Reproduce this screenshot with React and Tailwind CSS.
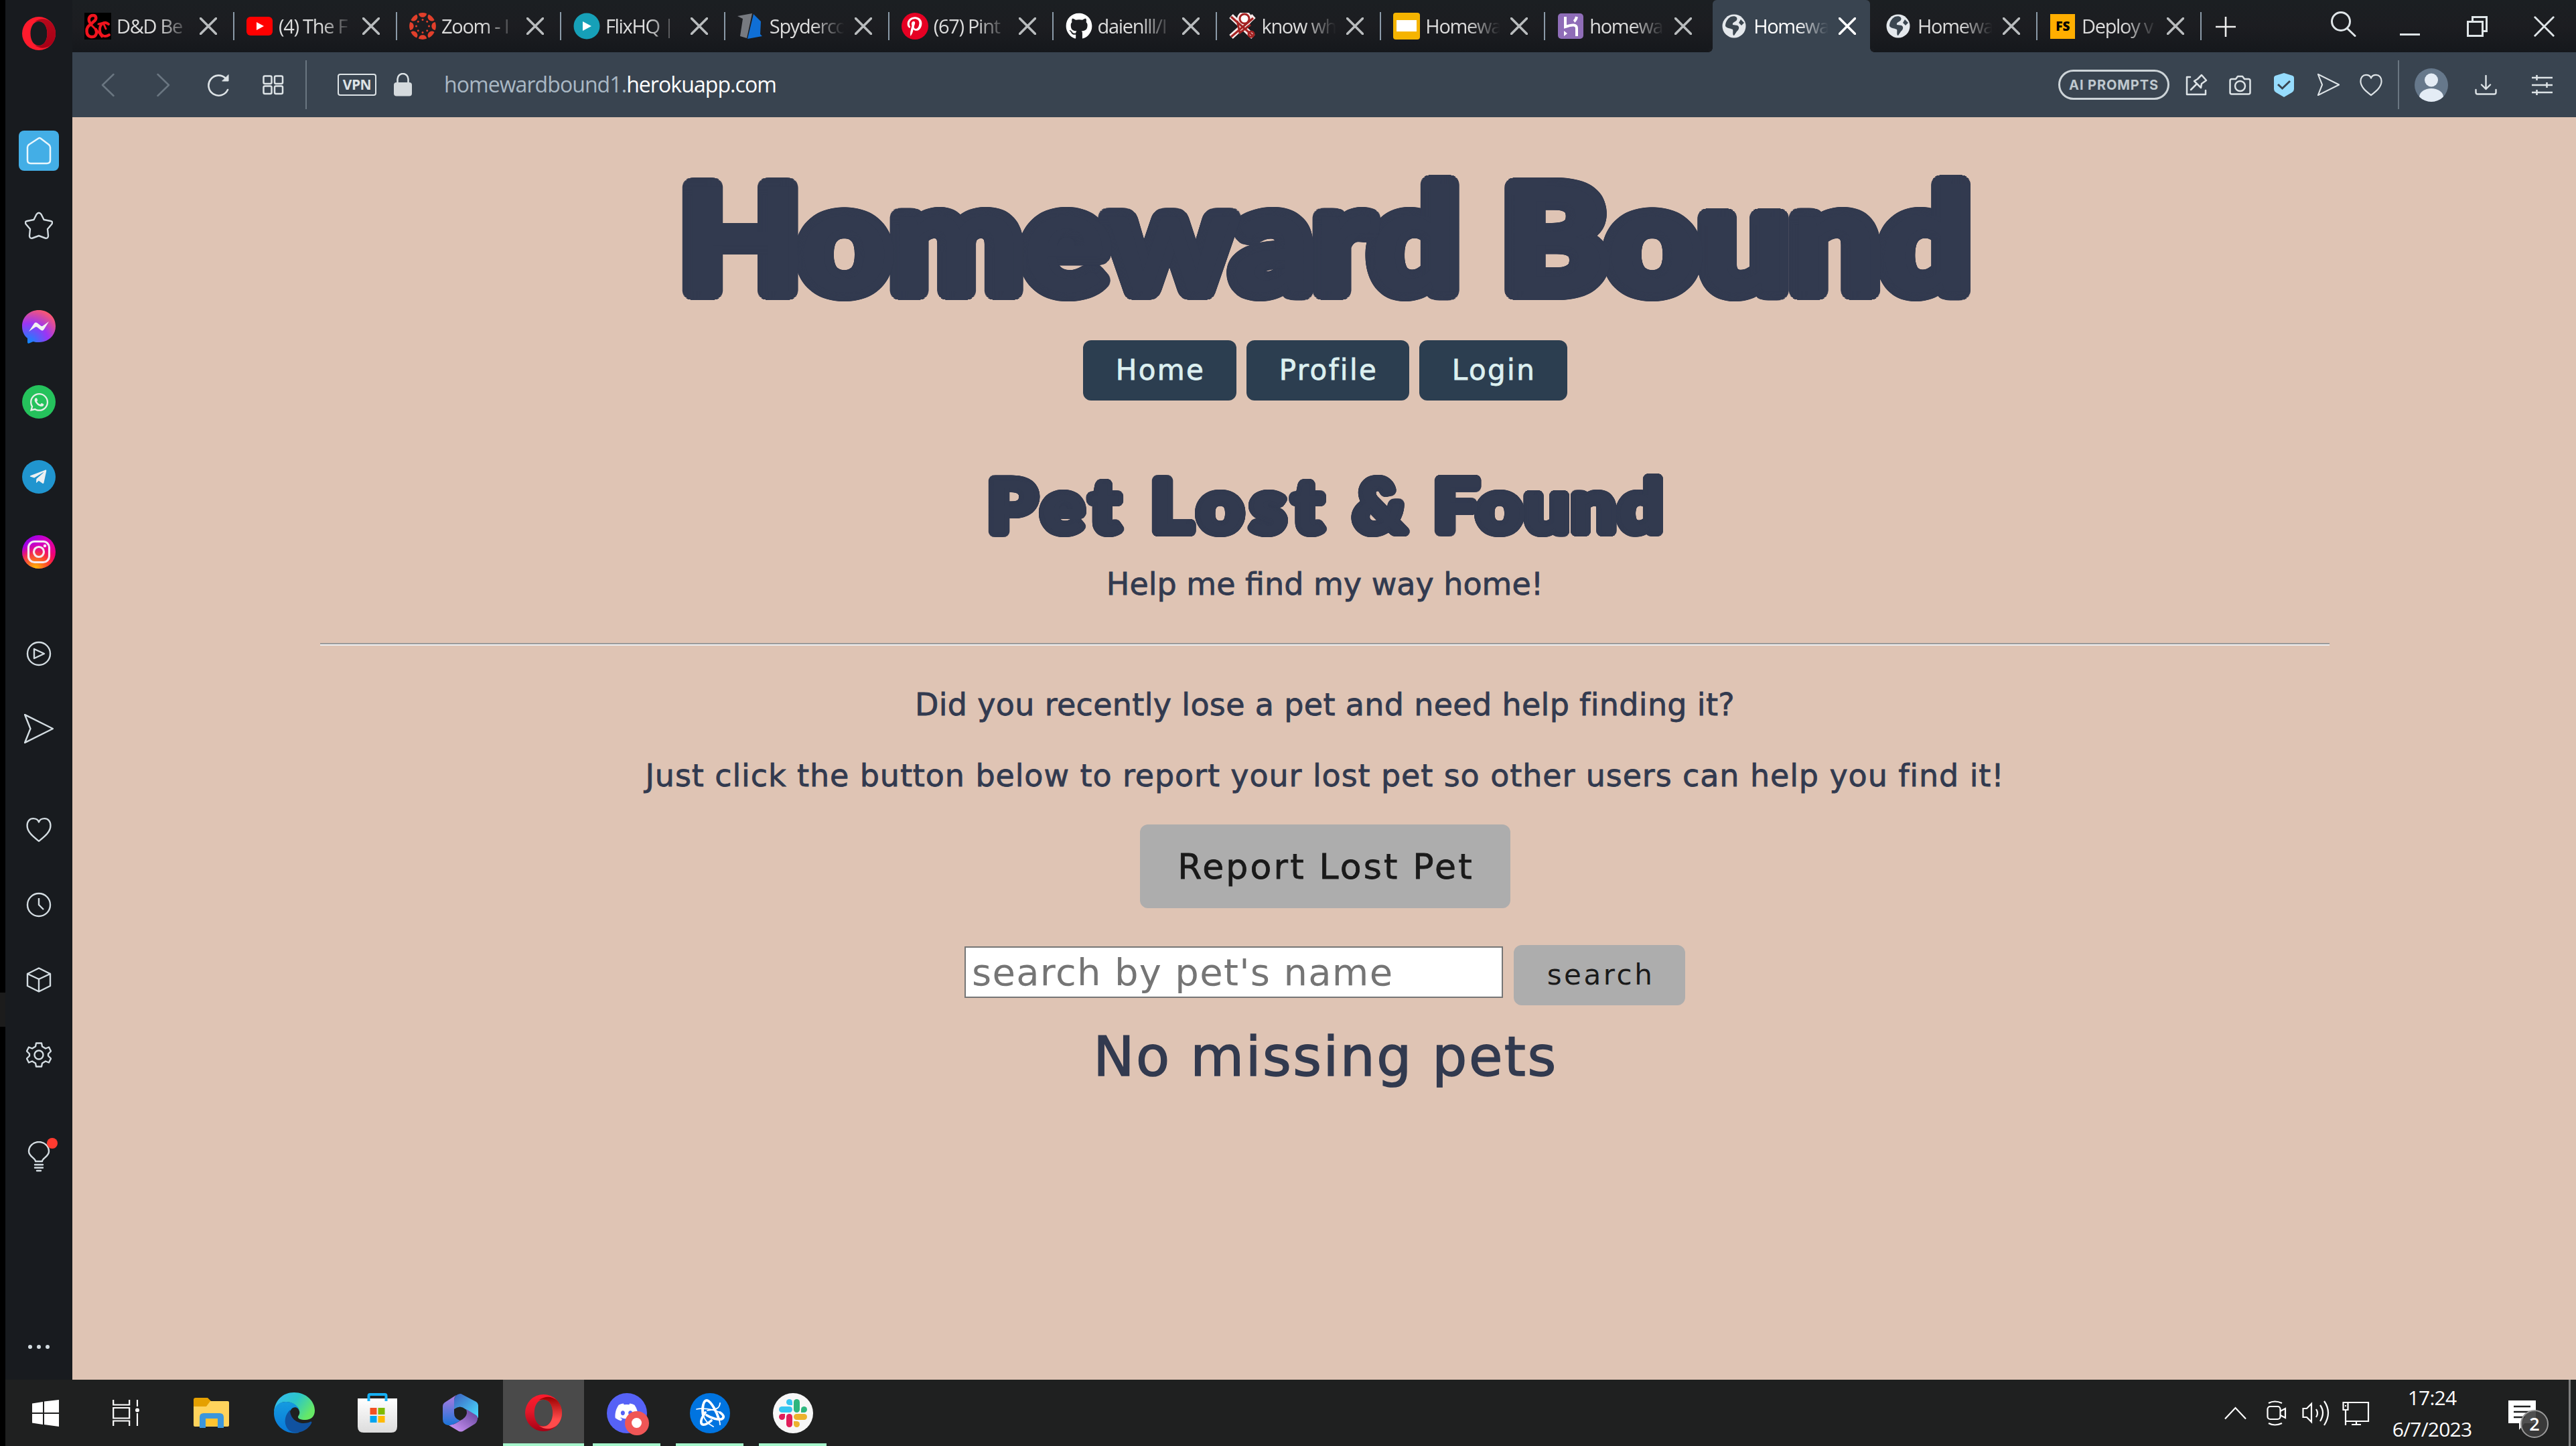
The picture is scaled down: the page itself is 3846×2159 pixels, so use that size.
import React from "react";
import { FaWhatsapp, FaGithub, FaDiscord, FaPinterestP, FaTelegramPlane } from "react-icons/fa";

const line = { fill: "none", stroke: "currentColor", strokeLinecap: "round", strokeLinejoin: "round" };

/* ---------- favicons ---------- */

const DndIcon = () => (
  <svg viewBox="0 0 40 40" className="size-10 bg-black">
    <g fill="none" stroke="#f0141e" strokeLinecap="round">
      <path strokeWidth="4.500" d="M10 17c-6-6-3-13 3-13 5 0 6 6 1 9l-5 5c-7 3-8 16 1 18 7 1 10-6 7-11" />
      <path strokeWidth="4" d="M36 17c-6-5-13 0-13 8 0 10 8 12 14 8" />
      <path strokeWidth="3" d="M11 19l10 10 5 7M21 17l7-2 4 9" />
    </g>
  </svg>
);
const YouTubeIcon = () => (
  <svg viewBox="0 0 40 40" className="size-10">
    <rect y="6" width="39" height="28" rx="6" fill="#f00" />
    <path d="M15 14l11 6-11 6z" fill="#fff" />
  </svg>
);
const CanvasIcon = () => (
  <svg viewBox="0 0 40 40" className="size-10" fill="#e13f2b">
    {[0, 45, 90, 135, 180, 225, 270, 315].map((a) => (
      <g key={a} transform={`rotate(${a} 20 20)`}>
        <path d="M14 1.200Q20-1 26 1.200C25.500 8.500 14.500 8.500 14 1.200z" />
        <circle cx="20" cy="10.500" r="1.500" />
      </g>
    ))}
  </svg>
);
const FlixIcon = () => (
  <svg viewBox="0 0 40 40" className="size-10">
    <circle cx="20" cy="20" r="19.500" fill="#16a0b8" />
    <path d="M14 13l13 7-13 7z" fill="#fff" />
  </svg>
);
const SpyderIcon = () => (
  <svg viewBox="0 0 40 40" className="size-10">
    <path d="M0 5l22-4-8 37-10-3 4-26z" fill="#777a80" />
    <path d="M24 2l11 11-1 19 3 3-22 4z" fill="#0f6fd6" />
  </svg>
);
const PinIcon = () => (
  <span className="flex size-10 items-center justify-center rounded-full bg-[#e60023] text-white">
    <FaPinterestP size={29} />
  </span>
);
const KnowIcon = () => (
  <svg viewBox="0 0 40 40" className="size-10" fill="none">
    <g stroke="#f6eaea" strokeWidth="8">
      <path d="M3 5l33 31M37 5L3 36" />
      <circle cx="23" cy="9" r="7" />
    </g>
    <g stroke="#a52222" strokeWidth="3">
      <path d="M3 6l32 28M36 8L3 36M12 12l4 18 16-12" />
      <circle cx="23" cy="9" r="7" fill="#fff" />
      <circle cx="33" cy="32" r="4" />
    </g>
  </svg>
);
const SlidesIcon = () => (
  <svg viewBox="0 0 40 40" className="size-10">
    <rect width="40" height="40" rx="4" fill="#f5b400" />
    <rect x="5" y="11" width="30" height="17" fill="#fff" />
  </svg>
);
const HerokuIcon = () => (
  <svg viewBox="0 0 40 40" className="size-10">
    <rect x="1" y="1" width="38" height="38" rx="5" fill="#8f6db8" />
    <path d="M12 6v15q17-6 17 2v12M29 6q-1 5-4 7" fill="none" stroke="#fff" strokeWidth="4" />
    <path d="M10 27l5 4-5 4z" fill="#fff" />
  </svg>
);
const GlobeIcon = () => (
  <svg viewBox="0 0 40 40" className="size-10">
    <circle cx="19" cy="20" r="17.500" fill="#e4e8ec" />
    <path d="M14 6c7-2 11 1 9 5-2 3-7 3-6 7l7 1c4 2 2 7-1 9l-4 6c-3 0-1-7-2-9-3-2-8-1-11-5 0-6 3-11 8-14zM29 10l5 5-4 4-4-4z" fill="#3b4650" />
  </svg>
);
const FsIcon = () => (
  <span className="flex size-[37px] items-center justify-center bg-[#ffae00] text-[19px] font-black text-black">FS</span>
);
const GithubIcon = () => <FaGithub size={40} color="#fff" />;

const tabs = [
  { Icon: DndIcon, title: "D&D Be", sep: true },
  { Icon: YouTubeIcon, title: "(4) The F", sep: true },
  { Icon: CanvasIcon, title: "Zoom - I", sep: true },
  { Icon: FlixIcon, title: "FlixHQ |", sep: true },
  { Icon: SpyderIcon, title: "Spyderco", sep: true },
  { Icon: PinIcon, title: "(67) Pint", sep: true },
  { Icon: GithubIcon, title: "daienlll/I", sep: true },
  { Icon: KnowIcon, title: "know wh", sep: true },
  { Icon: SlidesIcon, title: "Homewa", sep: true },
  { Icon: HerokuIcon, title: "homewa", sep: false },
  { Icon: GlobeIcon, title: "Homewa", active: true },
  { Icon: GlobeIcon, title: "Homewa", sep: true },
  { Icon: FsIcon, title: "Deploy v", sep: true },
];

const Cross = ({ s = 26, w = 3.6 }) => (
  <svg width={s} height={s} viewBox="0 0 26 26" className="shrink-0" {...line} strokeWidth={w}>
    <path d="M1.500 1.500l23 23M24.500 1.500l-23 23" />
  </svg>
);

function Tab({ Icon, title, sep, active, index }) {
  return (
    <div className={`relative flex h-[78px] shrink-0 items-center ${index === 0 ? "w-[242px]" : index === 1 ? "w-[243px]" : "w-[244.900px]"}`}>
      {active && (
        <div className="absolute inset-y-0 left-[5px] right-[5px] rounded-t-[6px] bg-[#394450]">
          <i className="absolute -left-[6px] bottom-0 size-[6px] bg-[radial-gradient(circle_at_0_0,#181a1e_5.500px,#394450_6px)]" />
          <i className="absolute -right-[6px] bottom-0 size-[6px] bg-[radial-gradient(circle_at_100%_0,#181a1e_5.500px,#394450_6px)]" />
        </div>
      )}
      <div className="relative flex w-full items-center pl-[18px] pr-[24px]">
        <span className="flex size-10 shrink-0 items-center justify-center">
          <Icon />
        </span>
        <span className={`ml-2 w-[114px] whitespace-nowrap text-[29px] leading-[44px] tracking-[-1.300px] [mask-image:linear-gradient(to_right,black_56%,transparent_98%)] ${active ? "text-white" : "text-[#dcdcdc]"}`}>
          {title}
        </span>
        <span className={`ml-auto ${active ? "text-white" : "text-[#b9bcbe]"}`}>
          <Cross />
        </span>
      </div>
      {sep && <div className="h-[42px] w-[2px] shrink-0 bg-[#8b9aa8]" />}
      {!sep && <div className="w-[2px] shrink-0" />}
    </div>
  );
}

function TabBar() {
  return (
    <div className="flex h-[78px] items-center bg-linear-to-b from-[#1b1f22] via-[#1c1d21] to-[#15181c]">
      {tabs.map((t, i) => (
        <Tab key={i} index={i} {...t} />
      ))}
      <svg width="30" height="30" viewBox="0 0 30 30" className="ml-[21px] mt-[2px] text-[#eee]" {...line} strokeWidth="2.600" strokeLinecap="butt">
        <path d="M15 0v30M0 15h30" />
      </svg>
      <div className="ml-auto flex items-center pr-[32px] text-[#dfe5e8]">
        <svg width="38" height="38" viewBox="0 0 38 38" className="mr-[65px] -mt-[6px]" {...line} strokeWidth="3">
          <circle cx="15" cy="15" r="13.500" />
          <path d="M24.500 25.500L36 36.500" />
        </svg>
        <div className="mr-[70px] mt-[25px] h-[3px] w-[30px] bg-current" />
        <svg width="31" height="31" viewBox="0 0 31 31" className="mr-[69px]" {...line} strokeWidth="3" strokeLinejoin="miter">
          <path d="M1.500 8.500h22v21h-22zM8.500 8V1.500h21v21h-6" />
        </svg>
        <Cross s={31} w={2.400} />
      </div>
    </div>
  );
}

const SendIcon = ({ s, w }) => (
  <svg width={s} height={s} viewBox="0 0 42 42" {...line} strokeWidth={w}>
    <path d="M1 1l40 20L1 41l8-20z" />
  </svg>
);
const HeartIcon = ({ s, w }) => (
  <svg width={s} height={s} viewBox="0 0 36 36" {...line} strokeWidth={w}>
    <path d="M18 34C12 29 1.500 22 1.500 12 1.500 6 5 2 10 2c4 0 7 2 8 5 1-3 4-5 8-5 5 0 8.500 4 8.500 10 0 10-10.500 17-16.500 22z" />
  </svg>
);

function AddressBar() {
  return (
    <div className="flex h-[97px] items-center bg-[#394450] text-[#dde3e6]">
      <svg width="20" height="36" viewBox="0 0 20 36" className="ml-[43px] text-[#6a7681]" {...line} strokeWidth="2.500">
        <path d="M18.500 2L2 18l16.500 16" />
      </svg>
      <svg width="20" height="36" viewBox="0 0 20 36" className="ml-[63px] text-[#6a7681]" {...line} strokeWidth="2.500">
        <path d="M1.500 2L18 18 1.500 34" />
      </svg>
      <svg width="34" height="34" viewBox="0 0 34 34" className="ml-[55px]" {...line} strokeWidth="2.600">
        <path d="M31 24A15 15 0 1 1 28 7" />
        <path d="M32 2v9h-9z" fill="currentColor" strokeWidth="1" />
      </svg>
      <svg width="32" height="30" viewBox="0 0 32 30" className="ml-[49px]" {...line} strokeWidth="2.500">
        <rect x="1.500" y="1.500" width="12" height="11.500" rx="2" />
        <rect x="18" y="1.500" width="12" height="11.500" rx="2" />
        <rect x="1.500" y="16.500" width="12" height="11.500" rx="2" />
        <rect x="18" y="16.500" width="12" height="11.500" rx="2" />
      </svg>
      <div className="ml-[32px] h-[73px] w-[2px] bg-[#6a7681]" />
      <div className="ml-[46px] flex h-[33px] w-[58px] items-center justify-center rounded-[4px] border-[2.500px] border-current text-[21px] font-bold leading-none tracking-[-0.500px]">VPN</div>
      <svg width="27" height="35" viewBox="0 0 27 35" className="ml-[26px]">
        <path d="M5.500 16V9a8 8 0 0 1 16 0v7" fill="none" stroke="currentColor" strokeWidth="2.500" />
        <rect y="14" width="27" height="20.500" rx="4" fill="#d5dadd" />
      </svg>
      <div className="ml-[48px] -mt-[1px] whitespace-nowrap text-[32px] leading-none tracking-[-0.930px] text-[#a9b8c4]">
        homewardbound1.<span className="text-white">herokuapp.com</span>
      </div>

      <div className="ml-auto flex items-center pr-[35px]">
        <div className="flex h-[45px] w-[166px] items-center justify-center rounded-full border-[3px] border-[#cdd4d8] font-[Inter] text-[20px] font-bold tracking-[0.900px] text-[#bfc8ce]">AI PROMPTS</div>
        <svg width="33" height="33" viewBox="0 0 33 33" className="ml-[24px]" {...line} strokeWidth="2.500">
          <path d="M7 5H2v26h28v-6M8 24l8-8M13 11l10 10 1-6 7-5-7-8-6 6z" />
        </svg>
        <svg width="33" height="30" viewBox="0 0 33 30" className="ml-[32px]" {...line} strokeWidth="2.500">
          <path d="M4 6h6l3-4h7l3 4h6q2.500 0 2.500 2.500V26q0 2.500-2.500 2.500H4Q1.500 28.500 1.500 26V8.500Q1.500 6 4 6z" />
          <circle cx="16.500" cy="16.500" r="7.500" />
        </svg>
        <svg width="32" height="36" viewBox="0 0 32 36" className="ml-[33px]">
          <path d="M16 0l13 4q2 1 2 3v17q0 3-3 5l-12 7-12-7q-3-2-3-5V7q0-2 2-3z" fill="#96dcfd" />
          <path d="M7 17l6.500 6L25 12" fill="none" stroke="#394450" strokeWidth="3" />
        </svg>
        <span className="ml-[34px]"><SendIcon s={33} w={2.600} /></span>
        <span className="ml-[30px]"><HeartIcon s={34} w={2.300} /></span>
        <div className="ml-[23px] h-[73px] w-[2px] bg-[#6a7681]" />
        <svg width="50" height="50" viewBox="0 0 50 50" className="ml-[23px]">
          <clipPath id="av"><circle cx="25" cy="25" r="25" /></clipPath>
          <g clipPath="url(#av)">
            <rect width="50" height="50" fill="#66788b" />
            <circle cx="25" cy="17.500" r="10" fill="#e4ecf5" />
            <ellipse cx="25" cy="43" rx="18" ry="13" fill="#e4ecf5" />
          </g>
        </svg>
        <svg width="33" height="30" viewBox="0 0 33 30" className="ml-[40px]" {...line} strokeWidth="2.400">
          <path d="M16.500 1v20M10 14.500l6.500 6.500 6.500-6.500M1.500 22v4q0 2.500 2.500 2.500h25q2.500 0 2.500-2.500v-4" />
        </svg>
        <svg width="31" height="31" viewBox="0 0 31 31" className="ml-[52px]" {...line} strokeWidth="2.500" strokeLinecap="butt">
          <path d="M0 5h31M0 16h31M0 27h31M7.500 1v8M22.500 12v8M7.500 23v8" />
        </svg>
      </div>
    </div>
  );
}

/* ---------- browser side bar ---------- */

const OperaRing = ({ w, h, dark = false }) => (
  <svg width={w} height={h} viewBox="0 0 50 50">
    <defs>
      <linearGradient id={dark ? "or1" : "or2"} x1="0" y1="0" x2="0" y2="1">
        <stop offset="0" stopColor="#ff1b2d" />
        <stop offset=".45" stopColor={dark ? "#ff1b2d" : "#e3182a"} />
        <stop offset="1" stopColor={dark ? "#ff1b2d" : "#a70014"} />
      </linearGradient>
      <linearGradient id={dark ? "os1" : "os2"} x1="0" y1="0" x2="0" y2="1">
        <stop offset="0" stopColor={dark ? "#b5081b" : "#9c0000"} />
        <stop offset={dark ? "1" : ".7"} stopColor={dark ? "#a50016" : "#ff4b4b"} />
      </linearGradient>
    </defs>
    <path fillRule="evenodd" fill={`url(#${dark ? "or1" : "or2"})`} d="M25 0a25 25 0 1 0 0 50 25 25 0 1 0 0-50zM25 7c8 0 12.500 8 12.500 18S33 43 25 43 12.500 35 12.500 25 17 7 25 7z" />
    <path fill={`url(#${dark ? "os1" : "os2"})`} d="M18 8C28 1 36 3 42 7c5 4 8 11 8 18s-3 14-8 18c-6 4-14 6-24-1 2 1 5 1.500 7 1.500C33 43 37.500 35 37.500 25S33 7 25 7c-3 0-5 0-7 1z" />
  </svg>
);

const Item = ({ children, first }) => (
  <div className={`flex h-[112px] shrink-0 items-center justify-center ${first ? "mt-[39.400px]" : ""}`}>{children}</div>
);

function Sidebar() {
  return (
    <div className="flex h-[2060px] w-[108px] shrink-0 flex-col border-l-[8px] border-black bg-[#181b1f] text-[#d3dce1]">
      <div className="mt-[25px] flex h-[50px] justify-center"><OperaRing w={50} h={50} dark /></div>
      <div className="h-[94px] shrink-0" />
      <Item>
        <div className="flex size-[60px] items-center justify-center rounded-[8px] bg-[#43aee6] text-[#e8f6fd]">
          <svg width="38" height="42" viewBox="0 0 38 42" {...line} strokeWidth="2.500">
            <path d="M18.500 2.500q1.500-1 3 0L34 12q2 2 2 4v19q0 5-5 5H7q-5 0-5-5V16q0-2 2-4z" />
          </svg>
        </div>
      </Item>
      <Item>
        <svg width="42" height="42" viewBox="0 0 42 42" {...line} strokeWidth="2.400">
          <path d="M17.500 4q3.500-4.500 7 0l4 8 10 2q4.500 1 1.500 5l-6 7 1 10q0 4.500-4.500 3.500L21 36l-9.500 3.500Q7 40.500 7 36l1-10-6-7q-3-4 1.500-5l10-2z" />
        </svg>
      </Item>
      <Item first>
        <svg width="50" height="50" viewBox="0 0 50 50">
          <defs>
            <radialGradient id="msg" cx=".2" cy="1" r="1.100">
              <stop offset="0" stopColor="#0a8cff" /><stop offset=".55" stopColor="#9b35f5" /><stop offset="1" stopColor="#ff5a6a" />
            </radialGradient>
          </defs>
          <path d="M25 0C11 0 0 10 0 24c0 8 3 14 8 18v6q0 2.500 2.500 1.500l6-2.500c3 1 5.500 1 8.500 1 14 0 25-10 25-24S39 0 25 0z" fill="url(#msg)" />
          <path d="M10 32l8-12q2-2.500 5-.5l5 4q1.500 1 3 0L40 17l-7.500 12q-2 3-5 .5l-5-4q-1.500-1-3 0z" fill="#f1f1f1" />
        </svg>
      </Item>
      <Item>
        <span className="flex size-[50px] items-center justify-center rounded-full bg-[#25c25c] text-[#e8efe9]"><FaWhatsapp size={31} /></span>
      </Item>
      <Item>
        <span className="flex size-[50px] items-center justify-center rounded-full bg-[#2095cf] text-[#ecf0f2]"><FaTelegramPlane size={28} className="-ml-[3px]" /></span>
      </Item>
      <Item>
        <svg width="50" height="50" viewBox="0 0 50 50">
          <defs>
            <linearGradient id="ig1" x1="0" y1="0" x2="1" y2="1"><stop offset="0" stopColor="#7a00ff" /><stop offset=".4" stopColor="#d300c5" /><stop offset="1" stopColor="#ff0050" /></linearGradient>
            <radialGradient id="ig2" cx=".4" cy="1" r=".75"><stop offset="0" stopColor="#ffc400" /><stop offset=".6" stopColor="#ff4a1a" stopOpacity=".75" /><stop offset="1" stopColor="#ff0050" stopOpacity="0" /></radialGradient>
          </defs>
          <circle cx="25" cy="25" r="25" fill="url(#ig1)" />
          <circle cx="25" cy="25" r="25" fill="url(#ig2)" />
          <g fill="none" stroke="#f5eaf2" strokeWidth="3.200"><rect x="9.500" y="9.500" width="31" height="31" rx="9" /><circle cx="25" cy="25" r="7.500" /></g>
          <circle cx="34" cy="16" r="2.300" fill="#f5eaf2" />
        </svg>
      </Item>
      <Item first>
        <svg width="38" height="38" viewBox="0 0 38 38" {...line} strokeWidth="2.400">
          <circle cx="19" cy="19" r="17" /><path d="M12 12l15 7-15 7z" />
        </svg>
      </Item>
      <Item><SendIcon s={44} w={2.300} /></Item>
      <Item first><HeartIcon s={38} w={2.300} /></Item>
      <Item>
        <svg width="38" height="38" viewBox="0 0 38 38" {...line} strokeWidth="2.400">
          <circle cx="19" cy="19" r="17" /><path d="M19 9v10l7 7" strokeLinecap="butt" />
        </svg>
      </Item>
      <Item>
        <svg width="38" height="38" viewBox="0 0 38 38" {...line} strokeWidth="2.400">
          <path d="M19 1.500l17 8.500v18l-17 8.500L2 28V10zM2 10l17 8 17-8M19 18v18" />
        </svg>
      </Item>
      <Item>
        <svg width="38" height="38" viewBox="0 0 38 38" {...line} strokeWidth="2.400">
          <path d="M15 1.500h8l1 5 5 3 5-2 3 6-4 4v3l4 4-3 6-5-2-5 3-1 5h-8l-1-5-5-3-5 2-3-6 4-4v-3l-4-4 3-6 5 2 5-3z" />
          <circle cx="19" cy="19" r="6.500" />
        </svg>
      </Item>
      <Item first>
        <div className="relative">
          <svg width="34" height="46" viewBox="0 0 34 46" {...line} strokeWidth="2.400">
            <path d="M12 30c0-5-10-7-10-15a15 14 0 0 1 30 0c0 8-10 10-10 15zM11 35h12M11 39.500h12M14 44h6" />
          </svg>
          <i className="absolute -right-[11px] -top-[5px] size-[16px] rounded-full bg-[#ff3b30]" />
        </div>
      </Item>
      <div className="mb-[46px] mt-auto flex justify-center gap-[7px]">
        <i className="size-[6px] rounded-full bg-current" />
        <i className="size-[6px] rounded-full bg-current" />
        <i className="size-[6px] rounded-full bg-current" />
      </div>
    </div>
  );
}

/* ---------- web page ---------- */

/* Shadows on a circle of the given radius, so that the letters swell with round corners. */
const swell = (r) =>
  Array.from({ length: 40 }, (_, i) => {
    const a = (i / 40) * 2 * Math.PI;
    return `${(r * Math.cos(a)).toFixed(2)}px ${(r * Math.sin(a)).toFixed(2)}px 0 currentColor`;
  }).join(",");

const navButton = "flex h-[90px] items-center justify-center rounded-[12px] bg-[#2c3e50] pl-[3px]";

function Page() {
  return (
    <main className="flex h-[1885px] flex-col items-center bg-[#dfc4b4] pl-[2px] font-['DejaVu_Sans',sans-serif] text-[#323a4f]">
      <h1
        className="mt-[66px] flex h-[222px] w-[1928px] items-center justify-between whitespace-nowrap font-[Lato] text-[216px] font-bold leading-[222px]"
        style={{ textShadow: swell(13) }}
      >
        <span className="origin-left scale-x-[1.095]">Homeward</span>
        <span className="origin-right scale-x-[1.110]">Bound</span>
      </h1>
      <nav className="mt-[45px] flex gap-[15px] text-[42px] leading-none tracking-[2.400px] text-[#dcf0f0] [-webkit-text-stroke:0.800px_currentColor]">
        <a className={`${navButton} w-[229px]`}>Home</a>
        <a className={`${navButton} w-[243px]`}>Profile</a>
        <a className={`${navButton} w-[221px]`}>Login</a>
      </nav>
      <h2
        className="mt-[98px] flex h-[112px] items-center whitespace-nowrap font-[Lato] text-[108px] font-bold leading-[112px]"
        style={{ textShadow: swell(7) }}
      >
        <span className="w-[244px] origin-left scale-x-[1.100] tracking-[9px]">Pet</span>
        <span className="w-[303px] origin-left scale-x-[1.100] tracking-[10px]">Lost</span>
        <span className="w-[119px]">&amp;</span>
        <span className="w-[343px] origin-left scale-x-[1.100] tracking-[2.500px]">Found</span>
      </h2>
      <p className="mt-[34px] text-[46px] leading-[60px] [-webkit-text-stroke:0.800px_currentColor]">Help me find my way home!</p>
      <hr className="mt-[58px] h-[4px] w-[3000px] border-0 border-t-2 border-b-2 border-t-[#9a9a9a] border-b-[#eeeeee]" />
      <p className="mt-[58px] whitespace-nowrap text-[46px] leading-[60px] tracking-[0.330px] [-webkit-text-stroke:0.800px_currentColor]">Did you recently lose a pet and need help finding it?</p>
      <p className="mt-[46px] whitespace-nowrap text-[46px] leading-[60px] tracking-[0.900px] [-webkit-text-stroke:0.800px_currentColor]">Just click the button below to report your lost pet so other users can help you find it!</p>
      <button className="mt-[43px] h-[125px] w-[553px] whitespace-nowrap rounded-[12px] bg-[#adadad] pl-[3px] text-[52px] leading-none tracking-[3.200px] text-[#1a1a1a] [-webkit-text-stroke:0.800px_currentColor]">Report Lost Pet</button>
      <form className="mt-[55px] flex h-[90px] gap-[16px]">
        <input
          placeholder="search by pet's name"
          className="mt-[2px] h-[77px] w-[804px] rounded-none border-2 border-[#767676] bg-white px-[9px] text-[56px] leading-none tracking-[1.300px] placeholder:text-[#757575]"
        />
        <button type="button" className="h-[90px] w-[256px] rounded-[12px] bg-[#adadad] pl-[4px] text-[42px] leading-none tracking-[3.500px] text-[#1a1a1a]">search</button>
      </form>
      <h3 className="mt-[27px] pl-[2px] text-[82px] leading-[100px] tracking-[2.500px] [-webkit-text-stroke:1.500px_currentColor]">No missing pets</h3>
    </main>
  );
}

/* ---------- task bar ---------- */

const App365 = () => (
  <svg width="53" height="57" viewBox="0 0 53 57">
    <defs>
      <linearGradient id="m1" x1="0" y1="0" x2="1" y2="1"><stop offset="0" stopColor="#3c5fc0" /><stop offset="1" stopColor="#4ae0ff" /></linearGradient>
      <linearGradient id="m2" x1="0" y1="0" x2="0" y2="1"><stop offset="0" stopColor="#b07be0" /><stop offset="1" stopColor="#1a74d8" /></linearGradient>
      <linearGradient id="m3" x1="0" y1="1" x2="1" y2="0"><stop offset="0" stopColor="#d69cff" /><stop offset="1" stopColor="#5b3e93" /></linearGradient>
    </defs>
    <path d="M26 0q-8 1-9 9v14q9-7 17 0l19 13V17q0-3-3-5L29 1q-1-1-3-1z" fill="url(#m1)" />
    <path d="M20 2L3 13q-3 2-3 6v19q0 8 8 9 6 1 18-7-9-3-9-11V9q0-4 3-7z" fill="url(#m2)" />
    <path d="M35 23l15 9q3 2 2 6-1 5-4 7L30 56q-3 1-6 0L9 47c4 0 10-2 17-7q9-4 10-11 0-3-1-6z" fill="url(#m3)" />
  </svg>
);
const Edge = () => (
  <svg width="61" height="61" viewBox="0 0 61 61">
    <defs>
      <linearGradient id="e1" x1="0" y1="0" x2="1" y2=".5"><stop offset="0" stopColor="#35b8f8" /><stop offset=".55" stopColor="#2cc6c8" /><stop offset="1" stopColor="#66e866" /></linearGradient>
      <linearGradient id="e2" x1="0" y1="0" x2="0" y2="1"><stop offset="0" stopColor="#159be0" /><stop offset="1" stopColor="#0878d8" /></linearGradient>
    </defs>
    <path d="M0 30C1 12 13 0 30 0c18 0 31 13 31 27 0 9-6 14-14 14-7 0-12-2-11-5 1-2 3-4 2-8-2-8-11-14-20-14C9 14 2 20 0 30z" fill="url(#e1)" />
    <path d="M0 31c0-11 8-17 18-17 12 0 20 8 20 14-2-7-9-7-12-3-10 12-2 30 12 35-20 4-38-10-38-29z" fill="url(#e2)" />
    <path d="M24 26c-14 14-6 34 8 34 11 0 20-6 24-14 1-2 0-3-2-2-14 6-30-2-30-18z" fill="#1052a0" />
  </svg>
);
const Folder = () => (
  <svg width="54" height="46" viewBox="0 0 54 46">
    <path d="M0 3q0-3 3-3h18l5 5-3 8H0z" fill="#e5a000" />
    <path d="M0 13h19l6-8h26q2 0 2 2v34q0 2-2 2H2q-2 0-2-2z" fill="#ffd35c" />
    <path d="M18 31h18v11H18z" fill="#ffc430" />
    <path d="M9 45V29q0-6 6-6h24q6 0 6 6v16h-9V31H18v14z" fill="#3a96dd" />
  </svg>
);
const Store = () => (
  <svg width="59" height="59" viewBox="0 0 59 59">
    <defs><linearGradient id="st" x1="0" y1="0" x2="0" y2="1"><stop offset="0" stopColor="#fff" /><stop offset="1" stopColor="#dcdcdc" /></linearGradient></defs>
    <path d="M0 8h59v42q0 9-9 9H9q-9 0-9-9z" fill="url(#st)" />
    <path d="M16.500 12V4q0-2 2-2h22q2 0 2 2v8" fill="none" stroke="#16b0f4" strokeWidth="4" />
    <path d="M18.500 22h10v10h-10z" fill="#f25022" /><path d="M30.500 22h10v10h-10z" fill="#7fba00" />
    <path d="M18.500 34h10v10h-10z" fill="#00a4ef" /><path d="M30.500 34h10v10h-10z" fill="#ffb900" />
  </svg>
);
const BattleNet = () => (
  <svg width="60" height="60" viewBox="0 0 60 60">
    <circle cx="30" cy="30" r="30" fill="#0074e0" />
    <g fill="none" stroke="#fff" strokeLinecap="round">
      <path strokeWidth="3.800" d="M19.500 32C18 22 20 10 26 11c6 2 14 17 17 27" />
      <path strokeWidth="1.800" d="M43 38c1.500 4 2 7 2 9M10 24c7-2 24-1 37 6" />
      <path strokeWidth="3.800" d="M45 29c6 4 7 8 2 10-5 1-14-1-22-6" />
      <path strokeWidth="3.800" d="M32 41c-6 6-13 8-15 4-1-3 1-9 6-16" />
      <path strokeWidth="1.800" d="M20 33c2 7 7 13 15 17M26 26C34 24 44 26 45 15" />
    </g>
  </svg>
);
const Slack = () => (
  <svg width="60" height="60" viewBox="0 0 60 60">
    <circle cx="30" cy="30" r="30" fill="#f7f7f7" />
    <g fill="#36c5f0"><rect x="9" y="20" width="20" height="9" rx="4.500" /><path d="M29 18h-4.500a4.500 4.500 0 1 1 4.500-4.500z" /></g>
    <g fill="#2eb67d"><rect x="31" y="9" width="9" height="20" rx="4.500" /><path d="M42 29v-4.500a4.500 4.500 0 1 1 4.500 4.500z" /></g>
    <g fill="#ecb22e"><rect x="31" y="31" width="20" height="9" rx="4.500" /><path d="M31 42h4.500a4.500 4.500 0 1 1-4.500 4.500z" /></g>
    <g fill="#e01e5a"><rect x="20" y="31" width="9" height="20" rx="4.500" /><path d="M18 31v4.500a4.500 4.500 0 1 1-4.500-4.500z" /></g>
  </svg>
);

const Slot = ({ children, running, active }) => (
  <div className={`relative flex h-full w-[121px] shrink-0 items-center justify-center ${active ? "bg-[#4a4a4a]" : ""}`}>
    {children}
    {(running || active) && <i className={`absolute bottom-0 h-[4px] bg-[#a4f4ca] ${active ? "inset-x-0" : "inset-x-[10px]"}`} />}
  </div>
);

function Taskbar() {
  return (
    <div className="flex h-[99px] items-center border-l-[8px] border-black bg-[#1f2020] text-white">
      <div className="-ml-px flex h-full items-center gap-[3px]">
        <Slot>
          <svg width="40" height="40" viewBox="0 0 40 40" fill="#fff">
            <path d="M0 5.500L16 3v16H0zM18 2.500L40 0v19H18zM0 21h16v16L0 34.500zM18 21h22v19l-22-3z" />
          </svg>
        </Slot>
        <Slot>
          <svg width="41" height="39" viewBox="0 0 41 39" className="-ml-[6px]" fill="none" stroke="#fff" strokeWidth="2.200">
            <path d="M1.200 0v7.500h24V0M1.200 39v-7.500h24V39M1.200 12h24v15.500h-24zM37 0v10M37 20v19" />
            <circle cx="37" cy="15.500" r="3" fill="#fff" stroke="none" />
          </svg>
        </Slot>
        <Slot><Folder /></Slot>
        <Slot><Edge /></Slot>
        <Slot><Store /></Slot>
        <Slot><App365 /></Slot>
        <Slot active><OperaRing w={55} h={55} /></Slot>
        <Slot running>
          <div className="relative flex size-[60px] items-center justify-center rounded-full bg-[#5662f6]">
            <FaDiscord size={37} className="-mt-[2px]" />
            <i className="absolute -bottom-[3px] -right-[3px] flex size-[36px] items-center justify-center rounded-full bg-[#f05656]">
              <i className="size-[15px] rounded-full bg-white" />
            </i>
          </div>
        </Slot>
        <Slot running><BattleNet /></Slot>
        <Slot running><Slack /></Slot>
      </div>
      <div className="ml-auto flex h-full items-center">
        <svg width="33" height="20" viewBox="0 0 33 20" fill="none" stroke="#fff" strokeWidth="2.200"><path d="M1 18.500L16.500 2 32 18.500" /></svg>
        <svg width="30" height="42" viewBox="0 0 30 42" className="ml-[30px]" fill="none" stroke="#fff" strokeWidth="2.200">
          <rect x="1.500" y="11" width="19" height="19" rx="4" /><path d="M20.500 18l7.500-4v14l-7.500-4M3 6q9-5 20 0M3 36q9 5 20 0" />
        </svg>
        <svg width="42" height="38" viewBox="0 0 42 38" className="ml-[23px]" fill="none" stroke="#fff" strokeWidth="2.200">
          <path d="M1.500 12H7l7-7v27l-7-7H1.500zM21 13q4 6 0 12M27 7q8 11 0 24M33 1q12 17 0 36" />
        </svg>
        <svg width="41" height="36" viewBox="0 0 41 36" className="ml-[18px]" fill="none" stroke="#fff" strokeWidth="2.200">
          <path d="M8 2h31v28H6M1.500 2h7v11h-7zM5 13v23M21 30v6M14 35h14M4 7h2" />
        </svg>
        <div className="ml-[32px] flex w-[122px] flex-col items-center whitespace-nowrap text-[30px] leading-[47px] tracking-[-0.800px]">
          <span>17:24</span>
          <span>6/7/2023</span>
        </div>
        <div className="relative ml-[53px]">
          <svg width="41" height="48" viewBox="0 0 41 48" className="mt-[10px]">
            <path d="M0 0h41v34H24L16 44V34H0z" fill="#fff" /><path d="M8 9h25M8 17h25M8 25h17" stroke="#1f2020" strokeWidth="2.400" />
          </svg>
          <span className="absolute -right-[19px] top-[24px] flex size-[42px] items-center justify-center rounded-full border-2 border-[#9a9a9a] bg-[#3c3c3c]/90 text-[27px] font-semibold leading-none">2</span>
        </div>
        <div className="ml-[49px] mr-[8px] h-full w-[3px] bg-[#7d7d7d]" />
      </div>
    </div>
  );
}

export default function App() {
  return (
    <div className="relative h-[2159px] w-[3846px] overflow-hidden bg-black font-['Open_Sans','Noto_Sans',sans-serif]">
      <div className="flex h-[2060px]">
        <Sidebar />
        <div className="flex w-[3738px] flex-col">
          <TabBar />
          <AddressBar />
          <Page />
        </div>
      </div>
      <Taskbar />
      <i className="absolute left-0 top-[1482px] h-[51px] w-[8px] bg-[#1c1c1c]" />
    </div>
  );
}
